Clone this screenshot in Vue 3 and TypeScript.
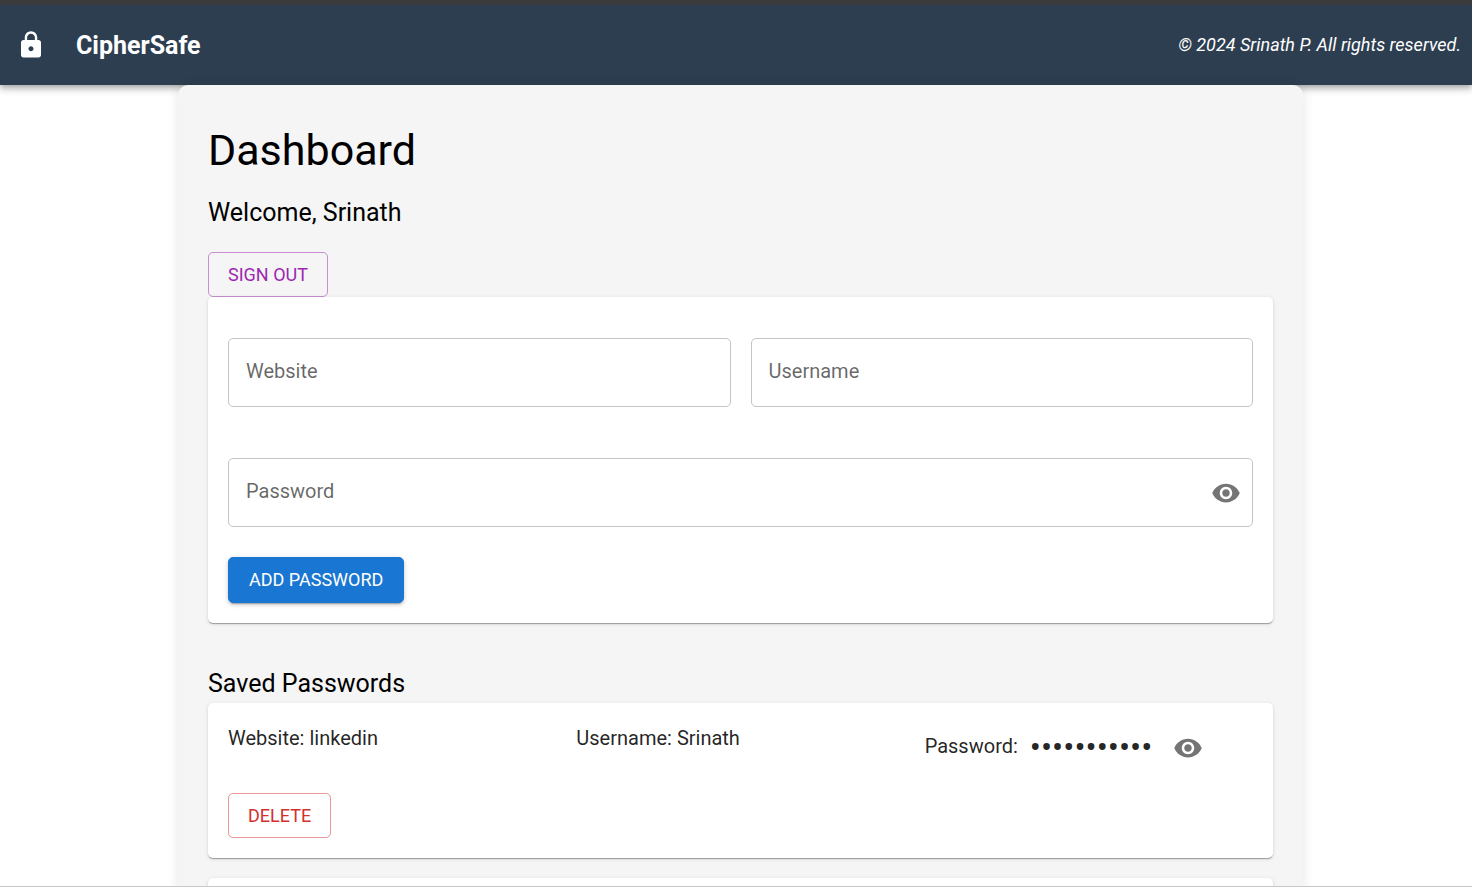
<script setup lang="ts">
import { ref } from 'vue'

interface Entry {
  id: number
  website: string
  username: string
  mask: string
}

const eyePath =
  'M12 4.5C7 4.5 2.73 7.61 1 12c1.73 4.39 6 7.5 11 7.5s9.27-3.11 11-7.5c-1.73-4.39-6-7.5-11-7.5M12 17c-2.76 0-5-2.24-5-5s2.24-5 5-5 5 2.24 5 5-2.24 5-5 5m0-8c-1.66 0-3 1.34-3 3s1.34 3 3 3 3-1.34 3-3-1.34-3-3-3'

const website = ref('')
const username = ref('')
const password = ref('')
const showPassword = ref(false)

const entries = ref<Entry[]>([
  { id: 1, website: 'linkedin', username: 'Srinath', mask: '•'.repeat(11) },
])

function removeEntry(id: number): void {
  entries.value = entries.value.filter((entry) => entry.id !== id)
}
</script>

<template>
  <div class="page">
    <header class="app-bar">
      <svg class="icon" viewBox="0 0 24 24" aria-hidden="true">
        <path
          d="M18 8h-1V6c0-2.76-2.24-5-5-5S7 3.24 7 6v2H6c-1.1 0-2 .9-2 2v10c0 1.1.9 2 2 2h12c1.1 0 2-.9 2-2V10c0-1.1-.9-2-2-2m-6 9c-1.1 0-2-.9-2-2s.9-2 2-2 2 .9 2 2-.9 2-2 2m3.1-9H8.9V6c0-1.71 1.39-3.1 3.1-3.1s3.1 1.39 3.1 3.1z"
        />
      </svg>
      <span class="brand">CipherSafe</span>
      <span class="rights">© 2024 Srinath P. All rights reserved.</span>
    </header>

    <div class="content">
      <main class="dashboard">
        <h1 class="title">Dashboard</h1>
        <h2 class="subtitle welcome">Welcome, Srinath</h2>
        <button type="button" class="button secondary">SIGN OUT</button>

        <form class="card form" @submit.prevent>
          <div class="field-row">
            <div class="field">
              <label v-show="!website" for="website">Website</label>
              <input id="website" v-model="website" type="text" />
            </div>
            <div class="field">
              <label v-show="!username" for="username">Username</label>
              <input id="username" v-model="username" type="text" />
            </div>
          </div>
          <div class="field password-field">
            <label v-show="!password" for="password">Password</label>
            <input id="password" v-model="password" :type="showPassword ? 'text' : 'password'" />
            <button
              type="button"
              class="icon-button"
              aria-label="Toggle password visibility"
              @click="showPassword = !showPassword"
            >
              <svg class="icon" viewBox="0 0 24 24" aria-hidden="true"><path :d="eyePath" /></svg>
            </button>
          </div>
          <button type="submit" class="button primary">ADD PASSWORD</button>
        </form>

        <h2 class="subtitle saved">Saved Passwords</h2>
        <ul class="list">
          <li v-for="entry in entries" :key="entry.id" class="card">
            <div class="details">
              <span>Website: {{ entry.website }}</span>
              <span>Username: {{ entry.username }}</span>
              <div class="secret">
                <span class="secret-label">Password:</span>
                <span class="mask">{{ entry.mask }}</span>
                <button type="button" class="icon-button" aria-label="Show password">
                  <svg class="icon" viewBox="0 0 24 24" aria-hidden="true"><path :d="eyePath" /></svg>
                </button>
              </div>
            </div>
            <button type="button" class="button danger" @click="removeEntry(entry.id)">DELETE</button>
          </li>
          <li class="card"></li>
        </ul>
      </main>
    </div>
  </div>
</template>

<style>
body {
  margin: 0;
  background: #fff;
}
</style>

<style scoped>
.page {
  box-sizing: border-box;
  height: 100vh;
  overflow: hidden;
  border-top: 5px solid #3b3b3b;
  border-bottom: 1px solid #c8c8c8;
  font: 20px/30px Roboto, sans-serif;
  color: rgba(0, 0, 0, 0.87);
}

.app-bar {
  display: flex;
  align-items: center;
  box-sizing: border-box;
  height: 80px;
  padding: 0 11px 0 16px;
  background: #2c3e50;
  color: #fff;
  box-shadow:
    0 2px 5px -1px rgba(0, 0, 0, 0.2),
    0 5px 6px rgba(0, 0, 0, 0.14),
    0 1px 12px rgba(0, 0, 0, 0.12);
}

.icon {
  display: block;
  width: 30px;
  height: 30px;
  fill: currentColor;
}

.brand {
  margin-left: 30px;
  font-size: 25px;
  font-weight: 700;
  line-height: 40px;
  padding-top: 2px;
}

.rights {
  margin-left: auto;
  font-size: 18px;
  font-style: italic;
}

.content {
  padding-left: 9px;
}

.dashboard {
  position: relative;
  box-sizing: border-box;
  max-width: 1125px;
  margin: 0 auto;
  padding: 39px 30px;
  border-radius: 10px;
  background: #f5f5f5;
  box-shadow: 0 0 12px rgba(0, 0, 0, 0.1);
}

.title {
  margin: 0 0 17px;
  font-size: 43px;
  font-weight: 400;
  line-height: 52px;
  color: #000;
}

.subtitle {
  margin: 0;
  font-size: 25px;
  font-weight: 400;
  line-height: 40px;
  color: #000;
}

.welcome {
  margin-bottom: 19px;
}

.saved {
  margin-top: 40px;
  padding-top: 1px;
  line-height: 39px;
}

.button {
  display: block;
  box-sizing: border-box;
  height: 45px;
  padding: 0 19px;
  border: 1px solid;
  border-radius: 5px;
  background: transparent;
  font: 400 18px/30px Roboto, sans-serif;
  cursor: pointer;
}

.secondary {
  border-color: rgba(156, 39, 176, 0.5);
  color: #9c27b0;
}

.danger {
  border-color: rgba(211, 47, 47, 0.5);
  color: #d32f2f;
}

.primary {
  height: 46px;
  padding: 0 20px;
  border-color: #1976d2;
  background: #1976d2;
  color: #fff;
  box-shadow:
    0 4px 1px -3px rgba(0, 0, 0, 0.2),
    0 2px 3px rgba(0, 0, 0, 0.14),
    0 1px 6px rgba(0, 0, 0, 0.12);
}

.card {
  box-sizing: border-box;
  padding: 20px;
  border-radius: 5px;
  background: #fff;
  box-shadow:
    0 2px 1px -1px rgba(0, 0, 0, 0.2),
    0 1px 1px rgba(0, 0, 0, 0.14),
    0 1px 4px rgba(0, 0, 0, 0.12);
}

.form {
  padding-top: 41px;
}

.field-row {
  display: grid;
  grid-template-columns: 1fr 1fr;
  gap: 20px;
  margin-bottom: 51px;
}

.field {
  display: grid;
  grid-template-columns: 1fr auto;
  align-items: center;
  box-sizing: border-box;
  height: 69px;
  border: 1px solid #c4c4c4;
  border-radius: 5px;
}

.field label {
  grid-area: 1 / 1;
  padding: 0 17px 4px;
  color: rgba(0, 0, 0, 0.6);
  pointer-events: none;
}

.field input {
  grid-area: 1 / 1;
  box-sizing: border-box;
  width: 100%;
  height: 67px;
  padding: 0 17px;
  border: 0;
  outline: 0;
  background: transparent;
  font: inherit;
  color: inherit;
}

.password-field {
  margin-bottom: 30px;
  padding-right: 1px;
}

.icon-button {
  padding: 10px;
  border: 0;
  border-radius: 50%;
  background: transparent;
  color: #757575;
  cursor: pointer;
}

.list {
  display: grid;
  gap: 20px;
  margin: 0;
  padding: 0;
  list-style: none;
}

.details {
  display: grid;
  grid-template-columns: repeat(3, 1fr);
  gap: 20px;
  margin-bottom: 20px;
}

.secret {
  display: flex;
  align-items: center;
}

.secret-label {
  padding-bottom: 4px;
}

.mask {
  margin: 0 11px 0 12px;
  font-size: 33px;
}
</style>
